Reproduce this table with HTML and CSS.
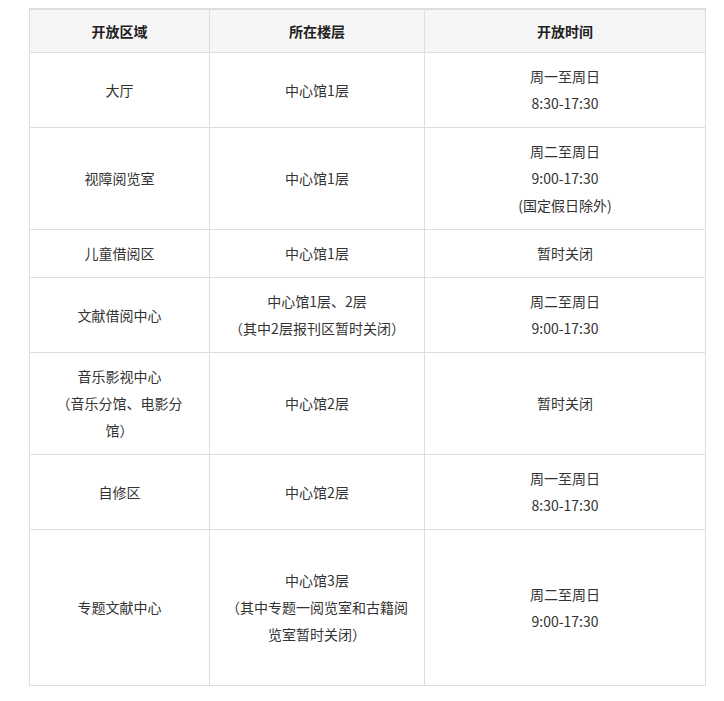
FILE: index.html
```html
<!DOCTYPE html>
<html lang="zh-CN">
<head>
<meta charset="utf-8">
<title>开放区域</title>
<link rel="stylesheet" href="styles.css">
</head>
<body>
<div class="wrap">
<table class="hours">
<colgroup>
<col class="c1"><col class="c2"><col class="c3">
</colgroup>
<thead>
<tr><th>开放区域</th><th>所在楼层</th><th>开放时间</th></tr>
</thead>
<tbody>
<tr><td>大厅</td><td>中心馆1层</td><td>周一至周日<br>8:30-17:30</td></tr>
<tr><td>视障阅览室</td><td>中心馆1层</td><td>周二至周日<br>9:00-17:30<br>(国定假日除外)</td></tr>
<tr><td>儿童借阅区</td><td>中心馆1层</td><td>暂时关闭</td></tr>
<tr><td>文献借阅中心</td><td>中心馆1层、2层<br>（其中2层报刊区暂时关闭）</td><td>周二至周日<br>9:00-17:30</td></tr>
<tr><td>音乐影视中心<br>（音乐分馆、电影分<br>馆）</td><td>中心馆2层</td><td>暂时关闭</td></tr>
<tr><td>自修区</td><td>中心馆2层</td><td>周一至周日<br>8:30-17:30</td></tr>
<tr class="tall"><td>专题文献中心</td><td>中心馆3层<br>（其中专题一阅览室和古籍阅<br>览室暂时关闭）</td><td>周二至周日<br>9:00-17:30</td></tr>
</tbody>
</table>
</div>
</body>
</html>
```
FILE: styles.css
```css
html, body {
  margin: 0;
  padding: 0;
  background: #fff;
}
.wrap {
  padding: 8px 0 0 29px;
}
.hours {
  border-collapse: collapse;
  table-layout: fixed;
  width: 676px;
  font-family: "Noto Sans CJK SC", "Noto Sans", sans-serif;
  font-size: 14px;
  line-height: 27px;
  color: #333;
}
.c1 { width: 180px; }
.c2 { width: 215px; }
.c3 { width: 281px; }
.hours th,
.hours td {
  border: 1px solid #ddd;
  text-align: center;
  vertical-align: middle;
  padding: 10px 15px;
}
.hours th {
  background: #f6f6f6;
  font-weight: bold;
  color: #222;
  border-top: 2px solid #ddd;
  padding: 7.5px 15px;
}
.hours .tall td {
  padding: 37px 15px;
}
```
